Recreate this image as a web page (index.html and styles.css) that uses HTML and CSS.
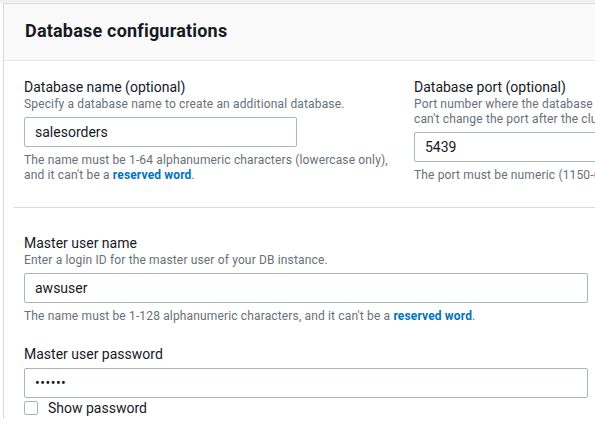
FILE: index.html
```html
<!DOCTYPE html>
<html lang="en">
<head>
<meta charset="utf-8">
<title>Database configurations</title>
<link rel="stylesheet" href="styles.css">
</head>
<body>
<div class="card">
  <div class="card-header">
    <h2 class="card-title">Database configurations</h2>
  </div>
  <div class="card-body">
    <div class="section row">
      <div class="field">
        <label class="label" for="dbname">Database name (optional)</label>
        <div class="desc">Specify a database name to create an additional database.</div>
        <input class="input input-short" id="dbname" type="text" value="salesorders">
        <div class="help">The name must be 1-64 alphanumeric characters (lowercase only), and it can't be a <a class="link" href="#">reserved word</a>.</div>
      </div>
      <div class="field">
        <label class="label" for="dbport">Database port (optional)</label>
        <div class="desc">Port number where the database accepts inbound connections. You can't change the port after the cluster is created.</div>
        <input class="input input-short" id="dbport" type="text" value="5439">
        <div class="help">The port must be numeric (1150-65535).</div>
      </div>
    </div>
    <div class="section">
      <div class="field">
        <label class="label" for="master">Master user name</label>
        <div class="desc">Enter a login ID for the master user of your DB instance.</div>
        <input class="input input-wide" id="master" type="text" value="awsuser">
        <div class="help">The name must be 1-128 alphanumeric characters, and it can't be a <a class="link" href="#">reserved word</a>.</div>
      </div>
      <div class="field field-pass">
        <label class="label" for="pass">Master user password</label>
        <input class="input input-wide input-pass" id="pass" type="password" value="secret">
        <label class="check-row"><input class="check" type="checkbox"><span>Show password</span></label>
      </div>
    </div>
  </div>
</div>
</body>
</html>
```
FILE: styles.css
```css
html, body {
  margin: 0;
  padding: 0;
}
body {
  background: #ffffff;
  border-top: 3px solid #f0f0f0;
  font-family: Roboto, "Open Sans", "Liberation Sans", Arial, sans-serif;
  color: #16191f;
  overflow: hidden;
  width: 595px;
  height: 418px;
}
.card {
  margin-left: 3px;
  width: 820px;
  border-top: 1px solid #dcdfe0;
  border-left: 1px solid #d5d9da;
  background: #ffffff;
}
.card-header {
  background: #fafafa;
  border-bottom: 1px solid #e4e7e8;
  height: 57px;
  box-sizing: border-box;
  padding: 15px 20px 0 21px;
}
.card-title {
  margin: 0;
  font-size: 18px;
  line-height: 24px;
  font-weight: 700;
  letter-spacing: 0.2px;
  color: #16191f;
}
.card-body {
  padding: 16px 0 0 10px;
}
.section {
  padding: 0 10px;
}
.row {
  display: grid;
  grid-template-columns: 372px 372px;
  column-gap: 18px;
  padding-bottom: 24px;
  border-bottom: 1px solid #d5dbdb;
  margin-bottom: 25px;
}
.field {
  display: flex;
  flex-direction: column;
  align-items: flex-start;
}
.field-pass {
  margin-top: 20px;
}
.label {
  font-size: 14px;
  line-height: 20px;
  color: #16191f;
}
.desc, .help {
  font-size: 12px;
  line-height: 15px;
  letter-spacing: 0.15px;
  color: #687078;
}
.desc {
  margin-bottom: 5px;
}
.help {
  margin-top: 6px;
}
.input {
  box-sizing: border-box;
  height: 30px;
  border: 1px solid #aab7b8;
  border-radius: 2px;
  padding: 0 10px;
  margin: 0;
  font-family: inherit;
  font-size: 14px;
  color: #16191f;
  background: #ffffff;
  outline: none;
}
.input-short {
  width: 273px;
}
.input-wide {
  width: 564px;
}
.input-pass {
  margin-top: 4px;
  font-size: 14px;
  letter-spacing: 0.5px;
}
.link {
  color: #0073bb;
  font-weight: 700;
  text-decoration: none;
}
.check-row {
  display: flex;
  align-items: center;
  height: 20px;
  font-size: 14px;
  line-height: 20px;
  color: #16191f;
}
.check {
  appearance: none;
  -webkit-appearance: none;
  width: 14px;
  height: 14px;
  margin: 0 10px 0 0;
  border: 1px solid #aab7b8;
  border-radius: 2px;
  background: #ffffff;
  box-sizing: border-box;
}
```
